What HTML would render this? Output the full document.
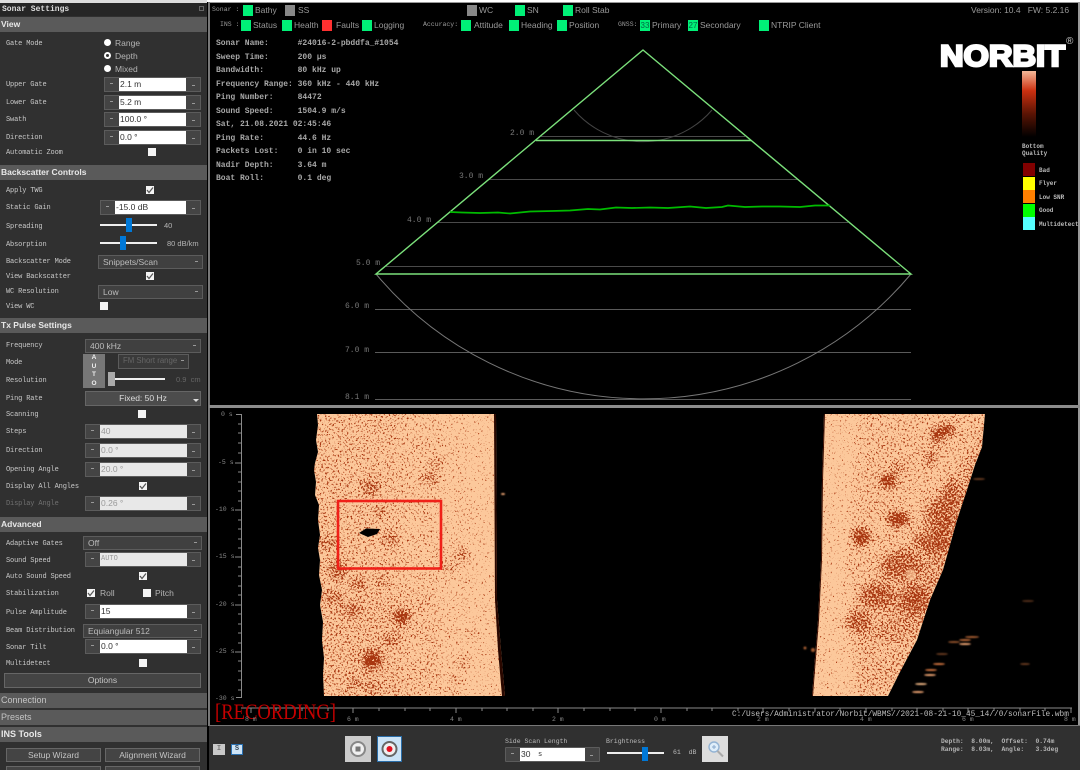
<!DOCTYPE html>
<html><head><meta charset="utf-8"><title>Sonar Settings</title>
<style>
html,body{margin:0;padding:0;background:#000;width:1080px;height:770px;overflow:hidden}
#w{position:relative;width:1080px;height:770px;overflow:hidden;background:#000;filter:blur(.3px)}
#w div,#w span,#w i,#w b{position:absolute;display:block;white-space:pre;font-style:normal}
.p{left:0;top:0;width:207px;height:770px;background:#303030}
.h{left:0;width:207px;height:15px;background:#5a5a5a;color:#e8e8e8;font:bold 8.5px/15px "Liberation Sans",sans-serif;padding-left:1px;box-sizing:border-box}
.hd{color:#c4c4c4;font-weight:normal;font-size:9px}
.l{left:6px;margin-top:1px;font:7px/10px "Liberation Mono",monospace;letter-spacing:-.15px;color:#c8c8c8;height:10px}
.s{font:8.5px/10px "Liberation Sans",sans-serif;color:#b5b5b5;height:10px}
.sp{background:#444;border:1px solid #5c5c5c;box-sizing:border-box}
.in{background:#fff;top:0;bottom:0;color:#333;font:8.5px/13px "Liberation Sans",sans-serif;padding-left:1px}
.dis{background:#e8e8e8;color:#999}
.mk{width:3px;height:1px;background:#999;top:5px}
.cb{background:#404040;border:1px solid #5c5c5c;box-sizing:border-box;color:#bcbcbc;font:8.5px/12px "Liberation Sans",sans-serif;padding-left:4px}
.cb:after{content:"";position:absolute;right:4px;top:5px;width:3px;height:1px;background:#999}
.ck{width:8px;height:8px;background:#f4f4f4}
.ck svg{position:absolute;left:0;top:0}
.r{width:7px;height:7px;border-radius:50%;background:#fff;left:104px}
.tr{height:2px;background:#eee}
.th{background:#0078d7;width:6px;height:14px}
.btn{background:#444;border:1px solid #666;box-sizing:border-box;color:#c4c4c4;font:8.5px/13px "Liberation Sans",sans-serif;text-align:center}
.g{background:#00f077;width:10px;height:11px}
.gr{background:#888}
.t{font:8.5px/12px "Liberation Sans",sans-serif;color:#999;height:12px}
.m{font:6.5px/10px "Liberation Mono",monospace;color:#999;height:10px}
.rg{margin-top:1px}
.o{left:216px;margin-top:1px;font:bold 8px/10px "Liberation Mono",monospace;color:#a8a8a8;height:10px}
.q{left:1039px;font:bold 6px/8px "Liberation Mono",monospace;color:#bbb;height:8px}
.w{left:1023px;width:12px;height:13px}
</style></head><body>
<div id="w">

<!-- main canvas drawing -->
<svg style="position:absolute;left:0;top:0" width="1080" height="770" viewBox="0 0 1080 770">
<defs>
<filter id="sp" filterUnits="userSpaceOnUse" x="300" y="410" width="700" height="290" color-interpolation-filters="sRGB">
<feGaussianBlur in="SourceAlpha" stdDeviation="4" result="b"/>
<feTurbulence type="fractalNoise" baseFrequency=".55" numOctaves="2" seed="7" result="n"/>
<feColorMatrix in="n" type="matrix" values="0 0 0 0 0 0 0 0 0 0 0 0 0 0 0 1.6 0 0 0 -.3" result="na"/>
<feComposite in="na" in2="b" operator="arithmetic" k1="0" k2="1" k3=".62" k4="0" result="s"/>
<feComponentTransfer in="s" result="th"><feFuncA type="linear" slope="5" intercept="-3.7"/></feComponentTransfer>
<feFlood flood-color="#a83610" result="c"/>
<feComposite in="c" in2="th" operator="in"/>
</filter>
<filter id="bl" x="-20%" y="-20%" width="140%" height="140%"><feGaussianBlur stdDeviation=".7"/></filter>
<clipPath id="cl"><path d="M317 414L318 425 316 440 318 452 315 463 314 470 316 482 315 495 319 505 318 520 320 535 318 548 320 560 319 575 322 590 320 605 323 622 322 640 324 658 323 675 324 696H505L501 650 497 600 496 414Z"/></clipPath>
<clipPath id="cr"><path d="M824 414L822 480 821 560 818 620 814 670 812 696H888L900 672 917 640 930 600 943 570 957 520 967 490 975 465 982 447 985 414Z"/></clipPath>
</defs>

<!-- wedge -->
<g stroke="#555" stroke-width="1" fill="none">
<path d="M541 136.5H745M489 179.5H797M438 222.5H848M386 266.5H900" stroke="#4a4a4a"/>
<path d="M375 309.5H911M375 352.5H911M375 399.5H911" stroke="#5a5a5a"/>
<path d="M574 110A91 91 0 0 0 712 110" stroke="#444"/>
<path d="M376 274A349 349 0 0 0 911 274" stroke="#777"/>
</g>
<g stroke="#7be07b" stroke-width="1.4" fill="none">
<path d="M376 274L643 50 911 274Z"/>
<path d="M536 140.5H751"/>
</g>
<path d="M450 212L462 212.5 480 213 498 212.5 510 213.5 530 211.5 552 211 570 210.5 588 209 600 209.5 616 207.5 632 208 650 207.5 668 208 690 206.5 706 208 722 207 728 205.5 745 207 762 206.5 780 206.5 800 207 815 205.5 830 205.5" fill="none" stroke="#00bb00" stroke-width="1.7"/>

<!-- side scan -->
<g clip-path="url(#cl)">
<rect x="310" y="414" width="200" height="283" fill="#fcc89b"/>
<g filter="url(#sp)">
<rect x="300" y="410" width="100" height="290" opacity=".2"/>
<rect x="400" y="410" width="40" height="290" opacity=".13"/>
<rect x="440" y="410" width="30" height="290" opacity=".06"/>
<rect x="310" y="590" width="130" height="110" opacity=".07"/>
<g fill="#000" opacity=".5">
<ellipse cx="370" cy="487" rx="9" ry="8"/><ellipse cx="437" cy="463" rx="6" ry="5"/><ellipse cx="430" cy="478" rx="9" ry="6"/>
<ellipse cx="328" cy="543" rx="12" ry="5"/><ellipse cx="390" cy="539" rx="10" ry="5"/><ellipse cx="462" cy="555" rx="7" ry="8"/>
<ellipse cx="447" cy="567" rx="10" ry="4"/><ellipse cx="332" cy="597" rx="11" ry="5"/><ellipse cx="352" cy="610" rx="9" ry="7"/>
<ellipse cx="391" cy="640" rx="9" ry="5"/><ellipse cx="464" cy="662" rx="7" ry="5"/><ellipse cx="456" cy="680" rx="6" ry="5"/>
<ellipse cx="354" cy="683" rx="6" ry="5"/><ellipse cx="372" cy="687" rx="8" ry="4"/><ellipse cx="452" cy="695" rx="6" ry="4"/>
<ellipse cx="474" cy="633" rx="5" ry="4"/><ellipse cx="382" cy="580" rx="6" ry="5"/><ellipse cx="359" cy="583" rx="9" ry="6"/>
<ellipse cx="337" cy="570" rx="10" ry="10"/><ellipse cx="380" cy="512" rx="6" ry="5"/>
</g>
<g fill="#000"><ellipse cx="402" cy="617" rx="8" ry="7"/><ellipse cx="372" cy="660" rx="9" ry="9"/></g>
</g>
<path d="M359 533L366 528.5 380 529 377 534 368 537Z" fill="#000"/>
<path d="M494 414H498L498 600 502 650 506 696H502L498 650 495 600Z" fill="#2a0800"/>
</g>
<g clip-path="url(#cr)">
<rect x="805" y="414" width="190" height="283" fill="#fcc89b"/>
<g filter="url(#sp)">
<path d="M860 410H990L960 540 930 620 900 700H860L845 560Z" opacity=".18"/>
<path d="M850 610L900 550 950 480 985 420 990 600 900 690 850 690Z" opacity=".12"/>
<path d="M965 470L990 420 990 520 940 610 905 640 870 640 900 590 935 540Z" opacity=".2"/>
<g fill="#000" opacity=".5">
<ellipse cx="933" cy="542" rx="20" ry="11"/><ellipse cx="900" cy="565" rx="20" ry="15"/><ellipse cx="877" cy="595" rx="18" ry="13"/>
<ellipse cx="857" cy="622" rx="14" ry="11"/><ellipse cx="940" cy="515" rx="14" ry="18"/><ellipse cx="950" cy="495" rx="8" ry="16"/>
<ellipse cx="898" cy="468" rx="7" ry="5"/><ellipse cx="931" cy="458" rx="6" ry="9"/>
<ellipse cx="915" cy="600" rx="14" ry="14"/>
</g>
<g fill="#000"><ellipse cx="947" cy="430" rx="8" ry="5"/><ellipse cx="937" cy="436" rx="5" ry="7"/><ellipse cx="888" cy="481" rx="8" ry="7"/>
<ellipse cx="898" cy="519" rx="11" ry="7"/><ellipse cx="861" cy="537" rx="9" ry="8"/></g>
</g>
<ellipse cx="911" cy="575" rx="5" ry="6" fill="#fcc89b" opacity=".7" filter="url(#bl)"/>
<path d="M822 414H825L823 480 822 560 819 620 815 670 813 696H811L813 620 820 480Z" fill="#3a0c00"/>
</g>
<g fill="#c8703c" filter="url(#bl)">
<ellipse cx="503" cy="494" rx="2" ry="1" fill="#e8a070"/>
<ellipse cx="979" cy="479" rx="6" ry="1" opacity=".5"/><ellipse cx="972" cy="637" rx="7" ry="1" opacity=".8"/><ellipse cx="965" cy="640" rx="6" ry="1" opacity=".9"/>
<ellipse cx="954" cy="642" rx="6" ry="1" opacity=".7"/><ellipse cx="965" cy="644" rx="6" ry="1" fill="#e8a070"/><ellipse cx="942" cy="654" rx="6" ry="1" opacity=".5"/>
<ellipse cx="939" cy="664" rx="6" ry="1"/><ellipse cx="931" cy="670" rx="6" ry="1"/><ellipse cx="930" cy="675" rx="6" ry="1" fill="#e8a070"/>
<ellipse cx="921" cy="684" rx="6" ry="1" fill="#e8b080"/><ellipse cx="918" cy="692" rx="6" ry="1" fill="#e8a070"/><ellipse cx="1028" cy="601" rx="6" ry="1" opacity=".4"/><ellipse cx="1025" cy="664" rx="5" ry="1" opacity=".5"/>
<ellipse cx="805" cy="648" rx="1.5" ry="1.5" opacity=".8"/><ellipse cx="813" cy="650" rx="2" ry="2" opacity=".8"/>
</g>
<rect x="338" y="501" width="103" height="67.5" fill="none" stroke="#f02018" stroke-width="2.6"/>

<!-- axes -->
<g stroke="#8a8a8a" fill="none" stroke-width="1">
<path d="M236 414.5H241.5V697.5H236M241 708H1072"/>
<path d="M235 463H241M235 510H241M235 557H241M235 605H241M235 652H241"/>
<path d="M238 424H241M238 433H241M238 443H241M238 453H241M238 472H241M238 482H241M238 491H241M238 501H241M238 520H241M238 529H241M238 539H241M238 548H241M238 567H241M238 576H241M238 586H241M238 595H241M238 614H241M238 624H241M238 633H241M238 643H241M238 661H241M238 671H241M238 680H241M238 690H241"/>
<path d="M251 708v5M276 708v3M302 708v3M328 708v3M353 708v5M379 708v3M405 708v3M430 708v3M456 708v5M482 708v3M507 708v3M533 708v3M558 708v5M584 708v3M610 708v3M635 708v3M661 708v5M687 708v3M712 708v3M738 708v3M763 708v5M789 708v3M815 708v3M840 708v3M866 708v5M892 708v3M917 708v3M943 708v3M968 708v5M994 708v3M1020 708v3M1045 708v3M1071 708v5"/>
</g>

<!-- colour bar + NORBIT logo -->
<defs><linearGradient id="bar" x1="0" y1="0" x2="0" y2="1"><stop offset="0" stop-color="#f4b898"/><stop offset=".3" stop-color="#cc3010"/><stop offset=".65" stop-color="#5a1404"/><stop offset="1" stop-color="#000"/></linearGradient></defs>
<rect x="1022" y="71" width="14" height="66" fill="url(#bar)"/>
<text x="940" y="66" font-family="Liberation Sans,sans-serif" font-weight="bold" font-size="30" fill="#fff" stroke="#fff" stroke-width="2.4" textLength="125" lengthAdjust="spacingAndGlyphs">NORBIT</text>
<text x="1066" y="44" font-family="Liberation Sans,sans-serif" font-size="10" fill="#ccc">®</text>
<text x="215" y="719" font-family="Liberation Serif,serif" font-size="22" fill="#c40000" textLength="121" lengthAdjust="spacingAndGlyphs">[RECORDING]</text>
</svg>

<!-- status rows -->
<div class="m" style="left:212px;top:5px">Sonar :</div>
<div class="g" style="left:243px;top:5px"></div><div class="t" style="left:255px;top:4px">Bathy</div>
<div class="g gr" style="left:285px;top:5px"></div><div class="t" style="left:298px;top:4px">SS</div>
<div class="g gr" style="left:467px;top:5px"></div><div class="t" style="left:479px;top:4px">WC</div>
<div class="g" style="left:515px;top:5px"></div><div class="t" style="left:527px;top:4px">SN</div>
<div class="g" style="left:563px;top:5px"></div><div class="t" style="left:575px;top:4px">Roll Stab</div>
<div class="t" style="left:971px;top:4px">Version: 10.4   FW: 5.2.16</div>

<div class="m" style="left:220px;top:20px">INS :</div>
<div class="g" style="left:241px;top:20px"></div><div class="t" style="left:253px;top:19px">Status</div>
<div class="g" style="left:282px;top:20px"></div><div class="t" style="left:294px;top:19px">Health</div>
<div class="g" style="left:322px;top:20px;background:#ff3030"></div><div class="t" style="left:336px;top:19px">Faults</div>
<div class="g" style="left:362px;top:20px"></div><div class="t" style="left:374px;top:19px">Logging</div>
<div class="m" style="left:423px;top:20px">Accuracy:</div>
<div class="g" style="left:461px;top:20px"></div><div class="t" style="left:474px;top:19px">Attitude</div>
<div class="g" style="left:509px;top:20px"></div><div class="t" style="left:521px;top:19px">Heading</div>
<div class="g" style="left:557px;top:20px"></div><div class="t" style="left:569px;top:19px">Position</div>
<div class="m" style="left:618px;top:20px">GNSS:</div>
<div class="g" style="left:640px;top:20px;color:#064;font:8px/11px 'Liberation Sans',sans-serif;text-align:center">33</div><div class="t" style="left:652px;top:19px">Primary</div>
<div class="g" style="left:688px;top:20px;color:#064;font:8px/11px 'Liberation Sans',sans-serif;text-align:center">27</div><div class="t" style="left:700px;top:19px">Secondary</div>
<div class="g" style="left:759px;top:20px"></div><div class="t" style="left:771px;top:19px">NTRIP Client</div>

<!-- sonar info -->
<div class="o" style="top:38px">Sonar Name:      #24016-2-pbddfa_#1054</div>
<div class="o" style="top:52px">Sweep Time:      200 µs</div>
<div class="o" style="top:65px">Bandwidth:       80 kHz up</div>
<div class="o" style="top:79px">Frequency Range: 360 kHz - 440 kHz</div>
<div class="o" style="top:92px">Ping Number:     84472</div>
<div class="o" style="top:106px">Sound Speed:     1504.9 m/s</div>
<div class="o" style="top:119px">Sat, 21.08.2021 02:45:46</div>
<div class="o" style="top:133px">Ping Rate:       44.6 Hz</div>
<div class="o" style="top:146px">Packets Lost:    0 in 10 sec</div>
<div class="o" style="top:160px">Nadir Depth:     3.64 m</div>
<div class="o" style="top:173px">Boat Roll:       0.1 deg</div>

<!-- range labels -->
<div class="m rg" style="left:510px;top:128px;color:#777;font-size:8px">2.0 m</div>
<div class="m rg" style="left:459px;top:171px;color:#777;font-size:8px">3.0 m</div>
<div class="m rg" style="left:407px;top:215px;color:#777;font-size:8px">4.0 m</div>
<div class="m rg" style="left:356px;top:258px;color:#777;font-size:8px">5.0 m</div>
<div class="m rg" style="left:345px;top:301px;color:#777;font-size:8px">6.0 m</div>
<div class="m rg" style="left:345px;top:345px;color:#777;font-size:8px">7.0 m</div>
<div class="m rg" style="left:345px;top:392px;color:#777;font-size:8px">8.1 m</div>

<!-- legend -->
<div class="q" style="left:1022px;top:143px">Bottom</div><div class="q" style="left:1022px;top:150px">Quality</div>
<div class="w" style="top:163px;background:#800000"></div><div class="q" style="top:167px">Bad</div>
<div class="w" style="top:177px;background:#ffff00"></div><div class="q" style="top:180px">Flyer</div>
<div class="w" style="top:190px;background:#ff8000"></div><div class="q" style="top:194px">Low SNR</div>
<div class="w" style="top:204px;background:#00ff00"></div><div class="q" style="top:207px">Good</div>
<div class="w" style="top:217px;background:#55ffff"></div><div class="q" style="top:221px">Multidetect</div>

<!-- time/dist labels -->
<div class="m" style="left:221px;top:410px;color:#888">0 s</div>
<div class="m" style="left:218px;top:458px;color:#888">-5 s</div>
<div class="m" style="left:215px;top:505px;color:#888">-10 s</div>
<div class="m" style="left:215px;top:552px;color:#888">-15 s</div>
<div class="m" style="left:215px;top:600px;color:#888">-20 s</div>
<div class="m" style="left:215px;top:647px;color:#888">-25 s</div>
<div class="m" style="left:215px;top:694px;color:#888">-30 s</div>
<div class="m" style="left:245px;top:715px;color:#888">8 m</div>
<div class="m" style="left:347px;top:715px;color:#888">6 m</div>
<div class="m" style="left:450px;top:715px;color:#888">4 m</div>
<div class="m" style="left:552px;top:715px;color:#888">2 m</div>
<div class="m" style="left:654px;top:715px;color:#888">0 m</div>
<div class="m" style="left:757px;top:715px;color:#888">2 m</div>
<div class="m" style="left:860px;top:715px;color:#888">4 m</div>
<div class="m" style="left:962px;top:715px;color:#888">6 m</div>
<div class="m" style="left:1064px;top:715px;color:#888">8 m</div>
<div class="m" style="left:732px;top:710px;font-size:7.8px;color:#bdbdbd">C:/Users/Administrator/Norbit/WBMS//2021-08-21-10_45_14//0/sonarFile.wbm</div>

<!-- frames -->
<div style="left:209px;top:2px;width:871px;height:1px;background:#999"></div>
<div style="left:0;top:0;width:1080px;height:2px;background:#fff"></div>
<div style="left:208px;top:2px;width:2px;height:724px;background:#777"></div>
<div style="left:1078px;top:2px;width:2px;height:724px;background:#999"></div>
<div style="left:209px;top:405px;width:871px;height:3px;background:#8c8c8c"></div>
<div style="left:209px;top:725px;width:871px;height:45px;background:#303030;border-top:1.5px solid #777;box-sizing:border-box"></div>

<!-- bottom bar -->
<div style="left:213px;top:744px;width:12px;height:11px;background:#c8c8c8;color:#777;font:bold 7px/11px 'Liberation Mono',monospace;text-align:center">I</div>
<div style="left:231px;top:744px;width:12px;height:11px;background:#cde4f7;border:1px solid #2a70b0;box-sizing:border-box;color:#345;font:bold 7px/9px 'Liberation Mono',monospace;text-align:center">S</div>
<div style="left:345px;top:736px;width:26px;height:26px;background:#ccc">
<svg width="26" height="26" style="position:absolute;left:0;top:0"><circle cx="13" cy="13" r="7" fill="#f0f0f0" stroke="#888" stroke-width="2"/><rect x="10.5" y="10.5" width="5" height="5" fill="#777"/></svg></div>
<div style="left:377px;top:736px;width:25px;height:26px;background:#cce4f7;border:1px solid #2a6da8;box-sizing:border-box">
<svg width="23" height="24" style="position:absolute;left:0;top:0"><circle cx="11.5" cy="12" r="7" fill="#f0f0f0" stroke="#666" stroke-width="2"/><circle cx="11.5" cy="12" r="3" fill="#e01020"/></svg></div>
<div class="m" style="left:505px;top:737px;color:#bbb">Side Scan Length</div>
<div class="sp" style="left:505px;top:747px;width:95px;height:15px;border-radius:1px"><i class="mk" style="left:5px;top:5px"></i><i class="in" style="left:14px;width:64px">30  <span style="left:18px;top:0;font:7px/14px 'Liberation Mono',monospace">s</span></i><i class="mk" style="left:84px;top:7px"></i></div>
<div class="m" style="left:606px;top:737px;color:#bbb">Brightness</div>
<div class="tr" style="left:607px;top:752px;width:57px"></div>
<div class="th" style="left:642px;top:747px;height:14px"></div>
<div class="m" style="left:673px;top:748px;color:#bbb">61  dB</div>
<div style="left:702px;top:736px;width:26px;height:26px;background:#ddd">
<svg width="26" height="26" style="position:absolute;left:0;top:0"><circle cx="12" cy="11" r="5" fill="#dfeefa" stroke="#93b3d4" stroke-width="1.4"/><path d="M15.5 15L21 20.5" stroke="#aaa" stroke-width="2"/><path d="M10 11H14M12 9V13" stroke="#88a8cc" stroke-width="1"/></svg></div>
<div class="m" style="left:941px;top:737px;color:#b5b5b5;font-size:6.3px;font-weight:bold">Depth:  8.00m,  Offset:  0.74m</div>
<div class="m" style="left:941px;top:745px;color:#b5b5b5;font-size:6.3px;font-weight:bold">Range:  8.03m,  Angle:   3.3deg</div>

<!-- left panel -->
<div class="p"></div>
<div style="left:0;top:0;width:207px;height:3px;background:#ddd"></div>
<div style="left:0;top:3px;width:207px;height:13px;background:#262626"></div>
<div style="left:2px;top:4px;font:bold 8px/11px 'Liberation Mono',monospace;color:#ddd">Sonar Settings</div>
<div style="left:199px;top:6px;width:5px;height:5px;border:1px solid #666;box-sizing:border-box"></div>

<div class="h" style="top:17px">View</div>
<div class="l" style="top:38px">Gate Mode</div>
<div class="r" style="top:39px"></div><div class="s" style="left:115px;top:38px">Range</div>
<div class="r" style="top:52px;background:#333;border:2px solid #fff;box-sizing:border-box"></div><div class="s" style="left:115px;top:51px">Depth</div>
<div class="r" style="top:65px"></div><div class="s" style="left:115px;top:64px">Mixed</div>
<div class="l" style="top:79px">Upper Gate</div>
<div class="sp" style="left:104px;top:77px;width:97px;height:15px"><i class="mk" style="left:5px"></i><i class="in" style="left:14px;width:66px">2.1 m</i><i class="mk" style="left:87px;top:7px"></i></div>
<div class="l" style="top:97px">Lower Gate</div>
<div class="sp" style="left:104px;top:95px;width:97px;height:15px"><i class="mk" style="left:5px"></i><i class="in" style="left:14px;width:66px">5.2 m</i><i class="mk" style="left:87px;top:7px"></i></div>
<div class="l" style="top:114px">Swath</div>
<div class="sp" style="left:104px;top:112px;width:97px;height:15px"><i class="mk" style="left:5px"></i><i class="in" style="left:14px;width:66px">100.0 °</i><i class="mk" style="left:87px;top:7px"></i></div>
<div class="l" style="top:132px">Direction</div>
<div class="sp" style="left:104px;top:130px;width:97px;height:15px"><i class="mk" style="left:5px"></i><i class="in" style="left:14px;width:66px">0.0 °</i><i class="mk" style="left:87px;top:7px"></i></div>
<div class="l" style="top:147px">Automatic Zoom</div>
<div class="ck" style="left:148px;top:148px"></div>

<div class="h" style="top:165px">Backscatter Controls</div>
<div class="l" style="top:185px">Apply TWG</div>
<div class="ck" style="left:146px;top:186px"><svg width="8" height="8"><path d="M1 4L3 6.5 7 1.5" fill="none" stroke="#555" stroke-width="1.2"/></svg></div>
<div class="l" style="top:202px">Static Gain</div>
<div class="sp" style="left:100px;top:200px;width:101px;height:15px"><i class="mk" style="left:5px"></i><i class="in" style="left:14px;width:70px">-15.0 dB</i><i class="mk" style="left:91px;top:7px"></i></div>
<div class="l" style="top:221px">Spreading</div>
<div class="tr" style="left:100px;top:224px;width:57px"></div><div class="th" style="left:126px;top:218px"></div>
<div class="s" style="left:164px;top:221px;font-size:7.5px">40</div>
<div class="l" style="top:239px">Absorption</div>
<div class="tr" style="left:100px;top:242px;width:57px"></div><div class="th" style="left:120px;top:236px"></div>
<div class="s" style="left:167px;top:239px;font-size:7.5px">80 dB/km</div>
<div class="l" style="top:256px">Backscatter Mode</div>
<div class="cb" style="left:98px;top:255px;width:105px;height:14px">Snippets/Scan</div>
<div class="l" style="top:271px">View Backscatter</div>
<div class="ck" style="left:146px;top:272px"><svg width="8" height="8"><path d="M1 4L3 6.5 7 1.5" fill="none" stroke="#555" stroke-width="1.2"/></svg></div>
<div class="l" style="top:286px">WC Resolution</div>
<div class="cb" style="left:98px;top:285px;width:105px;height:14px">Low</div>
<div class="l" style="top:301px">View WC</div>
<div class="ck" style="left:100px;top:302px"></div>

<div class="h" style="top:318px">Tx Pulse Settings</div>
<div class="l" style="top:340px">Frequency</div>
<div class="cb" style="left:85px;top:339px;width:116px;height:14px">400 kHz</div>
<div class="l" style="top:357px">Mode</div>
<div style="left:83px;top:354px;width:22px;height:34px;background:#777;color:#eee;font:bold 6.5px/8.5px 'Liberation Sans',sans-serif;text-align:center;white-space:normal">A<br>U<br>T<br>O</div>
<div class="cb" style="left:118px;top:354px;width:71px;height:15px;color:#666;background:#3a3a3a;font-size:7.8px">FM Short range</div>
<div class="l" style="top:375px">Resolution</div>
<div class="tr" style="left:109px;top:378px;width:56px"></div>
<div class="th" style="left:108px;top:372px;width:7px;background:#aaa"></div>
<div class="s" style="left:176px;top:375px;color:#666;font-size:7.5px">0.9  cm</div>
<div class="l" style="top:393px">Ping Rate</div>
<div class="btn" style="left:85px;top:391px;width:116px;height:15px;background:#4c4c4c;color:#ddd">Fixed: 50 Hz</div>
<div style="left:193px;top:399px;width:0;height:0;border-left:3px solid transparent;border-right:3px solid transparent;border-top:3px solid #ddd"></div>
<div class="l" style="top:409px">Scanning</div>
<div class="ck" style="left:138px;top:410px"></div>
<div class="l" style="top:426px">Steps</div>
<div class="sp" style="left:85px;top:424px;width:116px;height:15px"><i class="mk" style="left:5px"></i><i class="in dis" style="left:14px;width:86px">40</i><i class="mk" style="left:106px;top:7px"></i></div>
<div class="l" style="top:445px">Direction</div>
<div class="sp" style="left:85px;top:443px;width:116px;height:15px"><i class="mk" style="left:5px"></i><i class="in dis" style="left:14px;width:86px">0.0 °</i><i class="mk" style="left:106px;top:7px"></i></div>
<div class="l" style="top:464px">Opening Angle</div>
<div class="sp" style="left:85px;top:462px;width:116px;height:15px"><i class="mk" style="left:5px"></i><i class="in dis" style="left:14px;width:86px">20.0 °</i><i class="mk" style="left:106px;top:7px"></i></div>
<div class="l" style="top:481px">Display All Angles</div>
<div class="ck" style="left:139px;top:482px"><svg width="8" height="8"><path d="M1 4L3 6.5 7 1.5" fill="none" stroke="#555" stroke-width="1.2"/></svg></div>
<div class="l" style="top:498px;color:#707070">Display Angle</div>
<div class="sp" style="left:85px;top:496px;width:116px;height:15px"><i class="mk" style="left:5px"></i><i class="in dis" style="left:14px;width:86px">0.26 °</i><i class="mk" style="left:106px;top:7px"></i></div>

<div class="h" style="top:517px">Advanced</div>
<div class="l" style="top:538px">Adaptive Gates</div>
<div class="cb" style="left:83px;top:536px;width:119px;height:14px">Off</div>
<div class="l" style="top:555px">Sound Speed</div>
<div class="sp" style="left:85px;top:552px;width:116px;height:15px"><i class="mk" style="left:5px"></i><i class="in dis" style="left:14px;width:86px;font:7px/13px 'Liberation Mono',monospace">AUTO</i><i class="mk" style="left:106px;top:7px"></i></div>
<div class="l" style="top:571px">Auto Sound Speed</div>
<div class="ck" style="left:139px;top:572px"><svg width="8" height="8"><path d="M1 4L3 6.5 7 1.5" fill="none" stroke="#555" stroke-width="1.2"/></svg></div>
<div class="l" style="top:588px">Stabilization</div>
<div class="ck" style="left:87px;top:589px"><svg width="8" height="8"><path d="M1 4L3 6.5 7 1.5" fill="none" stroke="#555" stroke-width="1.2"/></svg></div>
<div class="s" style="left:100px;top:588px">Roll</div>
<div class="ck" style="left:143px;top:589px"></div>
<div class="s" style="left:155px;top:588px">Pitch</div>
<div class="l" style="top:607px">Pulse Amplitude</div>
<div class="sp" style="left:85px;top:604px;width:116px;height:15px"><i class="mk" style="left:5px"></i><i class="in" style="left:14px;width:86px">15</i><i class="mk" style="left:106px;top:7px"></i></div>
<div class="l" style="top:625px">Beam Distribution</div>
<div class="cb" style="left:83px;top:624px;width:119px;height:14px">Equiangular 512</div>
<div class="l" style="top:642px">Sonar Tilt</div>
<div class="sp" style="left:85px;top:639px;width:116px;height:15px"><i class="mk" style="left:5px"></i><i class="in" style="left:14px;width:86px">0.0 °</i><i class="mk" style="left:106px;top:7px"></i></div>
<div class="l" style="top:658px">Multidetect</div>
<div class="ck" style="left:139px;top:659px"></div>
<div class="btn" style="left:4px;top:673px;width:197px;height:15px">Options</div>

<div class="h hd" style="top:693px">Connection</div>
<div class="h hd" style="top:710px">Presets</div>
<div class="h" style="top:727px;font-size:9px">INS Tools</div>
<div class="btn" style="left:6px;top:748px;width:95px;height:14px">Setup Wizard</div>
<div class="btn" style="left:105px;top:748px;width:95px;height:14px">Alignment Wizard</div>
<div class="btn" style="left:6px;top:766px;width:95px;height:14px"></div>
<div class="btn" style="left:105px;top:766px;width:95px;height:14px"></div>
</div>
</body></html>
